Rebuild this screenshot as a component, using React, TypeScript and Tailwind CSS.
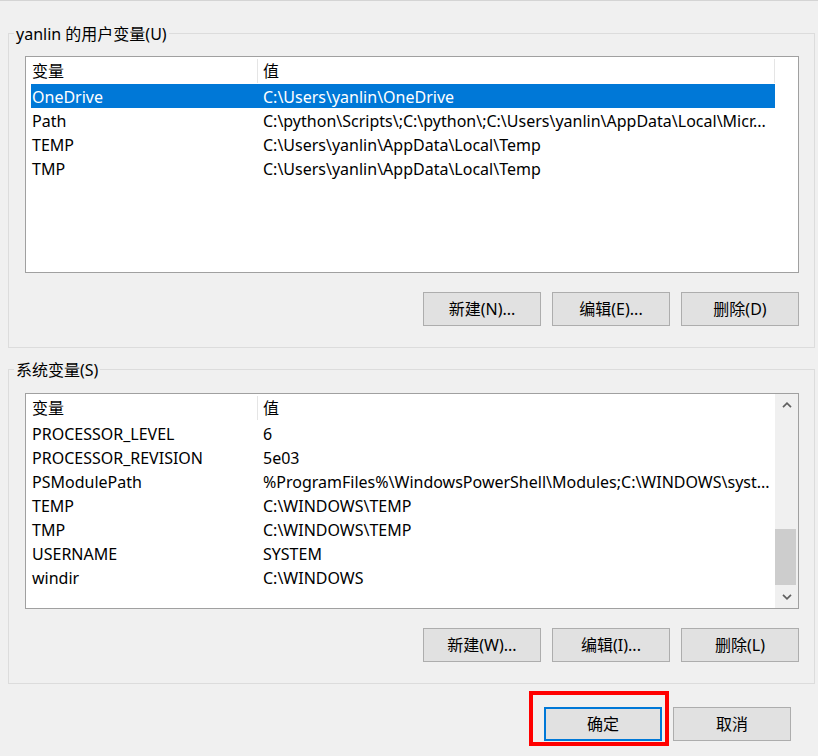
import React from "react";

type Row = { name: string; value: string; selected?: boolean };

const userRows: Row[] = [
  { name: "OneDrive", value: "C:\\Users\\yanlin\\OneDrive", selected: true },
  { name: "Path", value: "C:\\python\\Scripts\\;C:\\python\\;C:\\Users\\yanlin\\AppData\\Local\\Micr..." },
  { name: "TEMP", value: "C:\\Users\\yanlin\\AppData\\Local\\Temp" },
  { name: "TMP", value: "C:\\Users\\yanlin\\AppData\\Local\\Temp" },
];

const sysRows: Row[] = [
  { name: "PROCESSOR_LEVEL", value: "6" },
  { name: "PROCESSOR_REVISION", value: "5e03" },
  { name: "PSModulePath", value: "%ProgramFiles%\\WindowsPowerShell\\Modules;C:\\WINDOWS\\syst..." },
  { name: "TEMP", value: "C:\\WINDOWS\\TEMP" },
  { name: "TMP", value: "C:\\WINDOWS\\TEMP" },
  { name: "USERNAME", value: "SYSTEM" },
  { name: "windir", value: "C:\\WINDOWS" },
];

function Chevron({ up }: { up?: boolean }) {
  return (
    <svg width="10" height="6" viewBox="0 0 10 6" className="block">
      <path
        d={up ? "M1 5.2 L5 1.2 L9 5.2" : "M1 0.8 L5 4.8 L9 0.8"}
        fill="none"
        stroke="#606060"
        strokeWidth="1.7"
      />
    </svg>
  );
}

function Header({ endDivider }: { endDivider?: boolean }) {
  return (
    <div className="h-[27px] flex items-center">
      <div className="ml-[5px] w-[744px] flex items-center h-full">
        <div className="w-[226px] pl-[1px] pt-[2px]">变量</div>
        <div className="w-[1px] h-[24px] bg-[#e5e5e5]" />
        <div className="flex-1 pl-[5px] pt-[2px]">值</div>
        {endDivider && <div className="w-[1px] h-[24px] bg-[#e5e5e5]" />}
      </div>
    </div>
  );
}

function Rows({ rows }: { rows: Row[] }) {
  return (
    <div className="flex flex-col">
      {rows.map((r) => (
        <div
          key={r.name}
          className={
            "ml-[5px] w-[744px] h-[24px] pt-[2px] flex items-center whitespace-nowrap overflow-hidden " +
            (r.selected ? "bg-[#0078d7] text-white" : "")
          }
        >
          <div className="w-[231px] pl-[1px] shrink-0">{r.name}</div>
          <div className="pl-[1px]">{r.value}</div>
        </div>
      ))}
    </div>
  );
}

function Btn({ children }: { children: React.ReactNode }) {
  return (
    <div className="w-[118px] h-[34px] bg-[#e1e1e1] border border-[#adadad] flex items-center justify-center">
      {children}
    </div>
  );
}

export default function App() {
  return (
    <div className="w-[818px] h-[756px] bg-[#f0f0f0] border-t border-[#d4d4d4] overflow-hidden text-[16px] leading-[21px] text-black font-['Noto_Sans','Noto_Sans_CJK_SC',sans-serif]">
      {/* User variables group */}
      <div className="relative mt-[32px] ml-[8px] w-[807px] border border-[#dcdcdc] pt-[22px] pl-[16px] pb-[21px]">
        <div className="absolute left-[5px] top-[-10px] px-[2px] bg-[#f0f0f0]">yanlin 的用户变量(U)</div>
        <div className="w-[774px] h-[217px] border border-[#a0a0a0] bg-white">
          <div className="w-[749px]">
            <Header endDivider />
            <Rows rows={userRows} />
          </div>
        </div>
        <div className="w-[774px] mt-[19px] flex justify-end gap-[11px]">
          <Btn>新建(N)...</Btn>
          <Btn>编辑(E)...</Btn>
          <Btn>删除(D)</Btn>
        </div>
      </div>

      {/* System variables group */}
      <div className="relative mt-[21px] ml-[8px] w-[807px] border border-[#dcdcdc] pt-[23px] pl-[16px] pb-[21px]">
        <div className="absolute left-[5px] top-[-10px] px-[2px] bg-[#f0f0f0]">系统变量(S)</div>
        <div className="w-[774px] h-[216px] border border-[#a0a0a0] bg-white flex">
          <div className="w-[749px]">
            <Header />
            <Rows rows={sysRows} />
          </div>
          <div className="w-[23px] bg-[#f0f0f0] flex flex-col">
            <div className="h-[22px] flex items-center justify-center">
              <Chevron up />
            </div>
            <div className="flex-1 flex flex-col">
              <div className="mt-auto mr-[2px] h-[56px] bg-[#cdcdcd]" />
            </div>
            <div className="h-[23px] flex items-center justify-center">
              <Chevron />
            </div>
          </div>
        </div>
        <div className="w-[774px] mt-[19px] flex justify-end gap-[11px]">
          <Btn>新建(W)...</Btn>
          <Btn>编辑(I)...</Btn>
          <Btn>删除(L)</Btn>
        </div>
      </div>

      {/* Dialog buttons */}
      <div className="mt-[23px] pr-[27px] flex justify-end gap-[11px]">
        <div className="relative">
          <div className="w-[118px] h-[34px] bg-[#e1e1e1] border-2 border-[#0078d7] flex items-center justify-center">
            确定
          </div>
          <div className="absolute left-[-15px] top-[-16px] w-[140px] h-[55px] border-[4px] border-[#ff0000]" />
        </div>
        <Btn>取消</Btn>
      </div>
    </div>
  );
}
